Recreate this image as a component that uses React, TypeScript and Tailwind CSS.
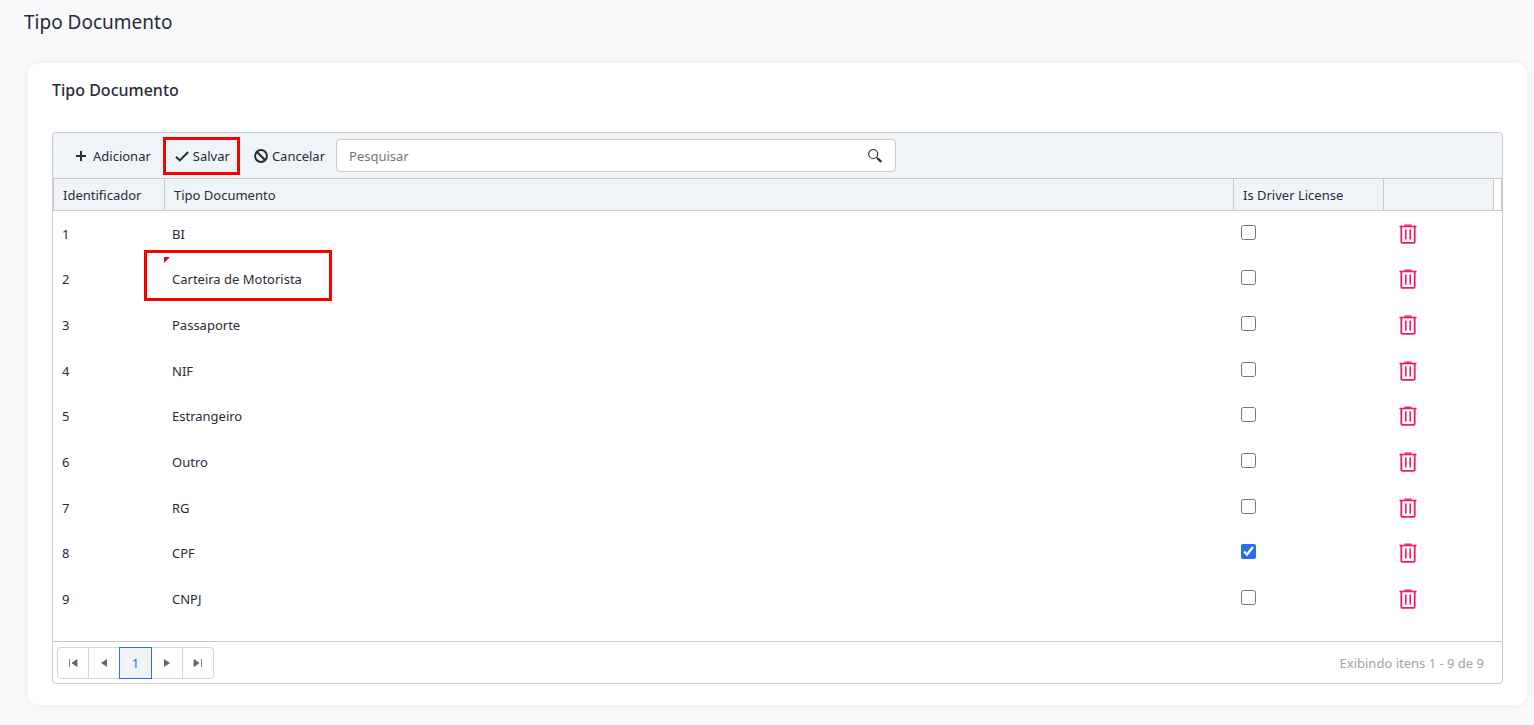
import React, { useState } from 'react';

type DocumentType = {
  id: number;
  name: string;
  isDriverLicense: boolean;
  dirty?: boolean;
};

const INITIAL_ROWS: DocumentType[] = [
  { id: 1, name: 'BI', isDriverLicense: false },
  { id: 2, name: 'Carteira de Motorista', isDriverLicense: false, dirty: true },
  { id: 3, name: 'Passaporte', isDriverLicense: false },
  { id: 4, name: 'NIF', isDriverLicense: false },
  { id: 5, name: 'Estrangeiro', isDriverLicense: false },
  { id: 6, name: 'Outro', isDriverLicense: false },
  { id: 7, name: 'RG', isDriverLicense: false },
  { id: 8, name: 'CPF', isDriverLicense: true },
  { id: 9, name: 'CNPJ', isDriverLicense: false },
];

const PlusIcon = () => (
  <svg width="12" height="12" viewBox="0 0 12 12" aria-hidden="true">
    <path d="M6 1v10M1 6h10" stroke="currentColor" strokeWidth="2" fill="none" />
  </svg>
);

const CheckIcon = () => (
  <svg width="14" height="12" viewBox="0 0 14 12" aria-hidden="true">
    <path d="M1 6.8l3.8 3.6L13.2 2" stroke="currentColor" strokeWidth="2" fill="none" />
  </svg>
);

const CancelIcon = () => (
  <svg width="14" height="14" viewBox="0 0 14 14" aria-hidden="true">
    <circle cx="7" cy="7" r="5.9" stroke="currentColor" strokeWidth="2" fill="none" />
    <path d="M3 3l8 8" stroke="currentColor" strokeWidth="2.2" />
  </svg>
);

const SearchIcon = () => (
  <svg width="16" height="16" viewBox="0 0 16 16" aria-hidden="true">
    <circle cx="6.2" cy="6" r="4.5" stroke="currentColor" strokeWidth="1.2" fill="none" />
    <path d="M9.6 9.4l1.4 1.4" stroke="currentColor" strokeWidth="1.4" />
    <path d="M10.7 10.5l3.6 3.4" stroke="currentColor" strokeWidth="2.4" />
  </svg>
);

const TrashIcon = () => (
  <svg width="18" height="20" viewBox="0 0 18 20" fill="none" stroke="currentColor" aria-hidden="true">
    <path d="M0.5 2.5h17" strokeWidth="1.6" />
    <path d="M5.5 1.2h7" strokeWidth="1.4" />
    <path d="M2.3 3v14.9q0 .9.9.9h11.6q.9 0 .9-.9V3" strokeWidth="1.8" />
    <path d="M6.8 5.5v10M11.2 5.5v10" strokeWidth="1.6" />
  </svg>
);

const PAGER_ICONS = {
  first: 'M1.5 1v8M9 1.5v7L4 5z',
  prev: 'M8 1v8L2 5z',
  next: 'M2 1v8l6-4z',
  last: 'M8.5 1v8M1 1.5v7l5-3.5z',
};

const PagerIcon = ({ name }: { name: keyof typeof PAGER_ICONS }) => (
  <svg width="10" height="10" viewBox="0 0 10 10" aria-hidden="true">
    <path d={PAGER_ICONS[name]} fill="currentColor" stroke={name === 'first' || name === 'last' ? 'currentColor' : 'none'} strokeWidth="0.8" />
  </svg>
);

const pagerButton = 'flex items-center justify-center w-8 h-8 -ml-px border border-[#d5d5d5] text-[#666]';

export default function App() {
  const [rows, setRows] = useState(INITIAL_ROWS);

  const toggle = (id: number) =>
    setRows(rows.map(r => (r.id === id ? { ...r, isDriverLicense: !r.isDriverLicense } : r)));

  return (
    <div className="min-h-screen bg-[#f8f9fb] pl-7 pr-[7px] pb-5 text-[#292b38] text-[13px] leading-5 font-['Noto_Sans',sans-serif]">
      <h1 className="-ml-1 pt-2 text-[19px] leading-7">Tipo Documento</h1>

      <main className="mt-[27px] bg-white rounded-xl shadow-[0_0_8px_rgba(0,0,0,0.06)] px-6 pt-4 pb-[21px]">
        <h2 className="text-base leading-[22px] font-medium">Tipo Documento</h2>

        <section className="mt-[31px] border border-[#c9c9c9] rounded">
          <div className="flex items-center h-[45px] bg-[#f0f4f8] rounded-t pl-[22px]">
            <button type="button" className="flex items-center gap-[6px]">
              <PlusIcon /> Adicionar
            </button>
            <button type="button" className="relative flex items-center gap-1 ml-6">
              <CheckIcon /> Salvar
              <span className="absolute -left-3 -right-[10px] -inset-y-[9px] border-3 border-[#f80000]" />
            </button>
            <button type="button" className="flex items-center gap-1 ml-6">
              <CancelIcon /> Cancelar
            </button>
            <label className="flex items-center justify-between w-[560px] h-[33px] ml-[11px] px-3 bg-white border border-[#c9c9c9] rounded">
              <input type="text" placeholder="Pesquisar" aria-label="Pesquisar" className="grow outline-none placeholder:text-[#757575]" />
              <SearchIcon />
            </label>
          </div>

          <div className="h-[464px] border-y border-[#c9c9c9]">
            <table className="w-full h-[443px] table-fixed border-separate border-spacing-0">
              <colgroup>
                <col className="w-[111px]" />
                <col />
                <col className="w-[150px]" />
                <col className="w-[110px]" />
                <col className="w-[9px]" />
              </colgroup>
              <thead>
                <tr className="h-8 text-left">
                  <th className="px-[9px] border-l border-b border-[#c9c9c9] bg-[#f0f4f8] font-normal">Identificador</th>
                  <th className="px-[9px] border-l border-b border-[#c9c9c9] bg-[#f0f4f8] font-normal">Tipo Documento</th>
                  <th className="px-[9px] border-l border-b border-[#c9c9c9] bg-[#f0f4f8] font-normal">Is Driver License</th>
                  <th className="border-l border-b border-[#c9c9c9] bg-[#f0f4f8]" aria-label="Ações" />
                  <th className="border-x border-b border-[#c9c9c9]" aria-hidden="true" />
                </tr>
              </thead>
              <tbody>
                {rows.map(row => (
                  <tr key={row.id}>
                    <td className="px-[9px]">{row.id}</td>
                    <td className="relative px-2">
                      {row.name}
                      {row.dirty && (
                        <>
                          <span className="absolute left-0 top-0 border-t-6 border-r-6 border-t-[#f0001c] border-r-transparent" />
                          <span className="absolute -left-5 -top-[7px] w-[188px] h-[51px] border-3 border-[#f80000]" />
                        </>
                      )}
                    </td>
                    <td className="px-2 pb-[3px]">
                      <input
                        type="checkbox"
                        aria-label="Is Driver License"
                        checked={row.isDriverLicense}
                        onChange={() => toggle(row.id)}
                        className="block w-[15px] h-[15px] accent-[#2970e8]"
                      />
                    </td>
                    <td className="px-4">
                      <button type="button" aria-label="Excluir" className="block text-[#f5195f]">
                        <TrashIcon />
                      </button>
                    </td>
                    <td />
                  </tr>
                ))}
              </tbody>
            </table>
          </div>

          <div className="flex items-center justify-between h-[41px] pl-[5px] pr-[18px]">
            <nav className="flex">
              <button type="button" aria-label="Primeira página" className={`${pagerButton} rounded-l`}>
                <PagerIcon name="first" />
              </button>
              <button type="button" aria-label="Página anterior" className={pagerButton}>
                <PagerIcon name="prev" />
              </button>
              <button type="button" className="relative w-[33px] h-8 -ml-px border border-[#2970e8] bg-[#f0f4f8] text-[#2970e8]">
                1
              </button>
              <button type="button" aria-label="Próxima página" className={pagerButton}>
                <PagerIcon name="next" />
              </button>
              <button type="button" aria-label="Última página" className={`${pagerButton} rounded-r`}>
                <PagerIcon name="last" />
              </button>
            </nav>
            <span className="text-[#a3a3a3]">Exibindo itens 1 - 9 de 9</span>
          </div>
        </section>
      </main>
    </div>
  );
}
